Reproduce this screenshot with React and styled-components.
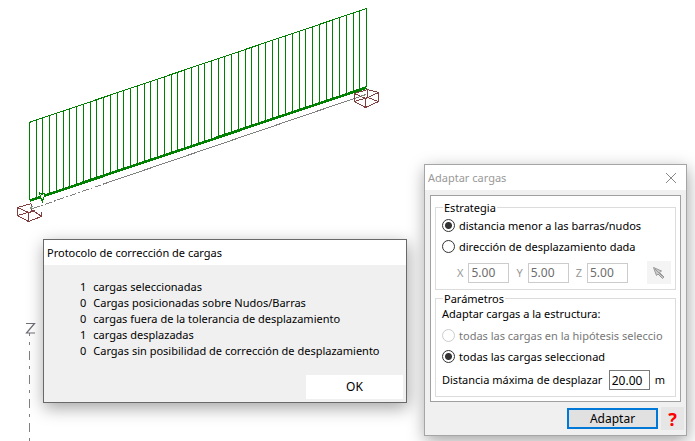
import React, { useState } from 'react';
import styled, { createGlobalStyle } from 'styled-components';

const GlobalStyle = createGlobalStyle`
  * {
    box-sizing: border-box;
  }

  body {
    margin: 0;
    background: #fff;
    color: #000;
    font-family: 'Noto Sans', 'Open Sans', sans-serif;
    font-size: 11px;
    line-height: 16px;
  }

  button,
  input {
    font: inherit;
    color: inherit;
    margin: 0;
  }
`;

const Desktop = styled.main`
  position: relative;
  min-height: 100vh;
  overflow: hidden;
`;

const Drawing = styled.svg`
  display: block;
  fill: none;
  shape-rendering: crispEdges;
`;

// Windows float over the drawing
const Window = styled.section`
  position: absolute;
  left: ${props => props.$x}px;
  top: ${props => props.$y}px;
  width: ${props => props.$width}px;
  background: #f0f0f0;
  border: 1px solid ${props => (props.$inactive ? '#a5a5a5' : '#696969')};
  box-shadow: 1px 5px 16px rgba(0, 0, 0, 0.36);
`;

const TitleBar = styled.header`
  display: flex;
  align-items: center;
  justify-content: space-between;
  height: 25px;
  padding: 0 8px 0 3px;
  background: #fff;
  color: ${props => (props.$inactive ? '#999' : '#000')};
`;

const Title = styled.h1`
  margin: 0;
  font-size: 11px;
  font-weight: 400;
  white-space: nowrap;
`;

const CloseButton = styled.button`
  display: flex;
  padding: 1px;
  border: none;
  background: none;
`;

const Report = styled.ul`
  list-style: none;
  margin: 0;
  padding: 14px 8px 16px 36px;
`;

const ReportLine = styled.li`
  display: flex;
  gap: 7px;
  white-space: nowrap;
`;

const Footer = styled.footer`
  display: flex;
  justify-content: flex-end;
  padding: ${props => props.$padding};
  gap: 3px;
`;

const OkButton = styled.button`
  width: 97px;
  height: 24px;
  padding: 0;
  border: none;
  background: #fff;
  font-size: 12px;
`;

const Panel = styled.div`
  display: flex;
  flex-direction: column;
  gap: 1px;
  margin: 5px 5px 0;
  padding: 4px;
  background: #fff;
  border: 1px solid #a0a0a0;
`;

const Group = styled.fieldset`
  min-width: 0;
  margin: 0;
  padding: ${props => props.$padding};
  border: 1px solid #dcdcdc;

  legend {
    height: 15px;
    margin-left: 1px;
    padding: 0 1px;
    line-height: 15px;
  }
`;

const Option = styled.label`
  display: flex;
  align-items: center;
  gap: 4px;
  height: 21px;
  white-space: nowrap;
  color: ${props => (props.$disabled ? '#777' : '#000')};
`;

const Radio = styled.input`
  appearance: none;
  flex: none;
  width: 13px;
  height: 13px;
  border: 1px solid #333;
  border-radius: 50%;
  background: #fff;

  &:checked {
    background: radial-gradient(circle, #333 3px, #fff 4px);
  }

  &:disabled {
    border-color: #ccc;
  }
`;

const Vector = styled.div`
  display: flex;
  align-items: center;
  gap: 7px;
  padding: 4px 1px 0 15px;
  color: #999;
`;

const Axis = styled.label`
  display: flex;
  align-items: center;
  gap: 5px;
`;

const NumberBox = styled.input`
  width: 41px;
  height: 20px;
  padding: 0 2px;
  border: 1px solid #7a7a7a;
  border-radius: 0;
  background: #fff;
  font-size: 12px;

  &:disabled {
    border-color: #ccc;
    color: #6d6d6d;
  }
`;

const PickButton = styled.button`
  display: flex;
  align-items: center;
  justify-content: center;
  width: 24px;
  height: 23px;
  margin-left: auto;
  padding: 0;
  border: none;
  background: #f4f4f4;
`;

const Caption = styled.p`
  margin: 0;
  height: 19px;
`;

const Distance = styled.div`
  display: flex;
  align-items: center;
  justify-content: space-between;
  padding: 3px 7px 0 0;
  white-space: nowrap;
`;

const Measure = styled.span`
  display: flex;
  align-items: center;
  gap: 5px;
`;

const ApplyButton = styled.button`
  width: 91px;
  height: 21px;
  margin-top: 1px;
  padding: 0;
  border: 2px solid #0078d7;
  background: #e1e1e1;
  font-size: 12px;
  line-height: 16px;
`;

const HelpButton = styled.button`
  width: 23px;
  height: 23px;
  padding: 0;
  border: none;
  background: #e6e6e6;
  color: #f00;
  font-size: 18px;
  font-weight: 700;
  line-height: 20px;
`;

const results = [
  [1, 'cargas seleccionadas'],
  [0, 'Cargas posicionadas sobre Nudos/Barras'],
  [0, 'cargas fuera de la tolerancia de desplazamiento'],
  [1, 'cargas desplazadas'],
  [0, 'Cargas sin posibilidad de corrección de desplazamiento'],
];

const LOAD_STEPS = 50;

// Distributed load over the bar: one ordinate per step between both ends
const ordinates = Array.from({ length: LOAD_STEPS + 1 }, (_, i) => {
  const t = i / LOAD_STEPS;
  return {
    x: Math.round(29 + 337 * t) + 0.5,
    top: 122 - 114 * t,
    bottom: 200 - 113 * t,
  };
});

function Structure() {
  return (
    <Drawing width="420" height="441" viewBox="0 0 420 441" role="img" aria-label="Carga sobre barra">
      <g stroke="#808080">
        <path d="M33 208.5 105 183.5" strokeDasharray="7 2 2 2" />
        <path d="M105 183.5 366 94.5" />
        <path d="M29.5 333V441" strokeDasharray="9 6 3 6" strokeDashoffset="6" />
      </g>
      <g stroke="#008000">
        {ordinates.map(o => (
          <path key={o.x} d={`M${o.x} ${o.top}V${o.bottom}`} />
        ))}
        <path d="M29 122.5 366.5 8.5" />
        <path d="M30 200.5 366.5 87.5" strokeWidth="2.6" />
        <path d="M39.5 192.5 42 194.5 44.5 193.5V196.5L43.5 197.5 42.5 201.5 40.5 197.5Z" fill="#fff" />
      </g>
      <g stroke="#804040">
        <path d="M31.5 203.5 17.5 207.5V215.5L28.5 221.5 41.5 216.5V212" />
        <path d="M17.5 207.5 28.5 212.5V221.5M31.5 203.5V211.5L17.5 215.5M28.5 212.5 34.5 211.5 41.5 216.5M31.5 210.5H35" />
        <path d="M367.5 89.5 354.5 93.5V101.5L365.5 107.5 378.5 101.5V92.5Z" />
        <path d="M354.5 93.5 365.5 98.5 378.5 92.5M365.5 98.5V107.5M367.5 89.5V97.5L354.5 101.5M367.5 97.5 378.5 101.5" />
      </g>
      <path d="M30 208.5H33M30 207.5 33 206.5M361 96.5 366 94.5" stroke="#809080" />
      <path
        d="M26 323.5H34.5L26.5 333H35"
        stroke="#707078"
        strokeWidth="1.2"
        shapeRendering="geometricPrecision"
      />
    </Drawing>
  );
}

function ReportWindow() {
  return (
    <Window $x={43} $y={239} $width={364}>
      <TitleBar>
        <Title>Protocolo de corrección de cargas</Title>
      </TitleBar>
      <Report>
        {results.map(([count, text]) => (
          <ReportLine key={text}>
            <span>{count}</span>
            <span>{text}</span>
          </ReportLine>
        ))}
      </Report>
      <Footer $padding="0 3px 3px">
        <OkButton type="button">OK</OkButton>
      </Footer>
    </Window>
  );
}

function AdaptWindow() {
  const [strategy, setStrategy] = useState('distance');
  const [distance, setDistance] = useState('20.00');

  return (
    <Window $x={424} $y={164} $width={263} $inactive>
      <TitleBar $inactive>
        <Title>Adaptar cargas</Title>
        <CloseButton type="button" aria-label="Cerrar">
          <svg width="12" height="12" viewBox="0 0 12 12" stroke="#888">
            <path d="M1 1 11 11M11 1 1 11" />
          </svg>
        </CloseButton>
      </TitleBar>
      <Panel>
        <Group $padding="0 3px 5px 6px">
          <legend>Estrategia</legend>
          <Option>
            <Radio
              type="radio"
              name="strategy"
              checked={strategy === 'distance'}
              onChange={() => setStrategy('distance')}
            />
            distancia menor a las barras/nudos
          </Option>
          <Option>
            <Radio
              type="radio"
              name="strategy"
              checked={strategy === 'direction'}
              onChange={() => setStrategy('direction')}
            />
            dirección de desplazamiento dada
          </Option>
          <Vector>
            {['X', 'Y', 'Z'].map(axis => (
              <Axis key={axis}>
                {axis}
                <NumberBox type="text" defaultValue="5.00" disabled={strategy !== 'direction'} />
              </Axis>
            ))}
            <PickButton type="button" aria-label="Seleccionar dirección">
              <svg width="14" height="14" viewBox="0 0 14 14" fill="#ccc" stroke="#999">
                <path d="M1.5 1.5 4.5 9.5 6 8 10.5 12.5 12 11 7.5 6.5 9.5 5Z" />
                <path d="M3 3 10.5 10.5" />
              </svg>
            </PickButton>
          </Vector>
        </Group>
        <Group $padding="0 3px 6px 6px">
          <legend>Parámetros</legend>
          <Caption>Adaptar cargas a la estructura:</Caption>
          <Option $disabled>
            <Radio type="radio" name="target" disabled />
            todas las cargas en la hipótesis seleccio
          </Option>
          <Option>
            <Radio type="radio" name="target" defaultChecked />
            todas las cargas seleccionad
          </Option>
          <Distance>
            <label htmlFor="distance">Distancia máxima de desplazar</label>
            <Measure>
              <NumberBox
                id="distance"
                type="text"
                value={distance}
                onChange={e => setDistance(e.target.value)}
              />
              m
            </Measure>
          </Distance>
        </Group>
      </Panel>
      <Footer $padding="5px 2px">
        <ApplyButton type="button">Adaptar</ApplyButton>
        <HelpButton type="button" aria-label="Ayuda">?</HelpButton>
      </Footer>
    </Window>
  );
}

function App() {
  return (
    <>
      <GlobalStyle />
      <Desktop>
        <Structure />
        <ReportWindow />
        <AdaptWindow />
      </Desktop>
    </>
  );
}

export default App;
